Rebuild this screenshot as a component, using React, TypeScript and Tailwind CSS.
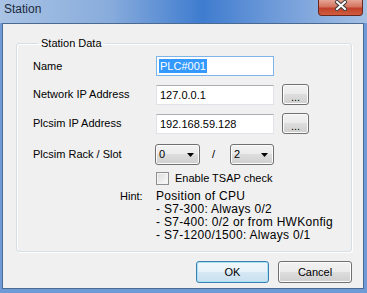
const font = "font-['Liberation_Sans',Arial,sans-serif]";

function Win7Button({ children, className = "", primary = false }: { children: React.ReactNode; className?: string; primary?: boolean }) {
  return (
    <div
      className={`flex items-center justify-center rounded-[3px] border ${
        primary
          ? "border-[#3c7fb1] bg-[linear-gradient(#f1f8fc_0%,#e6f1f8_49%,#d6e8f4_50%,#c9e0ef_100%)] shadow-[inset_0_0_0_1px_#a9e2f7]"
          : "border-[#707070] bg-[linear-gradient(#f2f2f2_0%,#ebebeb_49%,#dddddd_50%,#cfcfcf_100%)] shadow-[inset_0_0_0_1px_#fcfcfc]"
      } text-black ${className}`}
    >
      {children}
    </div>
  );
}

function TextBox({ value, focused = false }: { value: string; focused?: boolean }) {
  return (
    <div
      className={`flex h-[20px] w-[118px] items-center border bg-white pl-[2px] ${
        focused ? "border-[#7eb4ea]" : "border-[#dfe3e8] border-t-[#abadb3]"
      }`}
    >
      {focused ? (
        <span className="bg-[#3399ff] px-[1px] leading-[14px] text-white">{value}</span>
      ) : (
        <span className="px-[1px] leading-[14px]">{value}</span>
      )}
    </div>
  );
}

function Combo({ value, width }: { value: string; width: string }) {
  return (
    <Win7Button className={`h-[21px] ${width} !justify-between pl-[3px] pr-[5px]`}>
      <span>{value}</span>
      <svg width="7" height="4" viewBox="0 0 7 4">
        <path d="M0 0h7L3.5 4z" fill="#000" />
      </svg>
    </Win7Button>
  );
}

export default function App() {
  return (
    <div className={`${font} flex h-[293px] w-[367px] flex-col bg-[#6e9bd6] text-[11px] text-black`}>
      {/* Title bar */}
      <div className="relative flex h-[23px] items-center bg-[linear-gradient(90deg,#a9c3e4_0%,#88acdc_30%,#3f7ccf_55%,#6f9bd9_75%,#a4c0e4_100%)] pl-[4px]">
        <span className="mb-[5px] text-[12px] text-[#1b2a3c]">Station</span>
        <div className="absolute right-[4px] top-0 flex h-[16px] w-[45px] items-center justify-center rounded-b-[4px] border border-t-0 border-[#6b2620] bg-[linear-gradient(#e6a494_0%,#d4745f_45%,#c2402b_55%,#cf5d3e_100%)]">
          <svg width="12" height="11" viewBox="0 0 12 11" className="mb-[4px]">
            <path d="M2 2l8 7M10 2l-8 7" stroke="#3a3a3a" strokeWidth="4" strokeLinecap="square" />
            <path d="M2 2l8 7M10 2l-8 7" stroke="#ffffff" strokeWidth="2" strokeLinecap="square" />
          </svg>
        </div>
      </div>

      {/* Client area */}
      <div className="ml-[2px] mr-[3px] h-[266px] border border-[#4a6a92] bg-[#f0f0f0]">
        <div className="ml-[13px] w-[336px]">
          <fieldset className="mt-[12px] h-[216px] rounded-[3px] border border-[#d5dfe5] px-[16px] shadow-[inset_1px_1px_0_#ffffff,1px_1px_0_#ffffff]">
            <legend className="ml-[5px] px-[3px] leading-[14px]">Station Data</legend>

            <div className="mt-[6px] flex h-[20px] items-center">
              <span className="w-[123px]">Name</span>
              <TextBox value="PLC#001" focused />
            </div>

            <div className="mt-[8px] flex h-[21px] items-center">
              <span className="w-[123px]">Network IP Address</span>
              <TextBox value="127.0.0.1" />
              <Win7Button className="ml-[8px] h-[21px] w-[27px] items-end pb-[2px] leading-[10px]">...</Win7Button>
            </div>

            <div className="mt-[8px] flex h-[21px] items-center">
              <span className="w-[123px]">Plcsim IP Address</span>
              <TextBox value="192.168.59.128" />
              <Win7Button className="ml-[8px] h-[21px] w-[27px] items-end pb-[2px] leading-[10px]">...</Win7Button>
            </div>

            <div className="mt-[10px] flex h-[21px] items-center">
              <span className="w-[122px]">Plcsim Rack / Slot</span>
              <Combo value="0" width="w-[45px]" />
              <span className="ml-[12px] w-[18px]">/</span>
              <Combo value="2" width="w-[44px]" />
            </div>

            <div className="mt-[6px] flex h-[14px] items-center pl-[123px]">
              <div className="h-[13px] w-[13px] border border-[#8e8f8f] bg-[linear-gradient(135deg,#dcdcdc,#fbfbfb)] shadow-[inset_0_0_0_1px_#f4f4f4]" />
              <span className="ml-[6px]">Enable TSAP check</span>
            </div>

            <div className="mt-[5px] flex pl-[87px] leading-[13px]">
              <span className="w-[36px]">Hint:</span>
              <div className="flex flex-col text-[12px] tracking-[0.3px]">
                <span>Position of CPU</span>
                <span>- S7-300: Always 0/2</span>
                <span>- S7-400: 0/2 or from HWKonfig</span>
                <span>- S7-1200/1500: Always 0/1</span>
              </div>
            </div>
          </fieldset>

          <div className="mt-[9px] flex justify-end gap-[9px]">
            <Win7Button primary className="h-[22px] w-[73px]">OK</Win7Button>
            <Win7Button className="h-[22px] w-[74px]">Cancel</Win7Button>
          </div>
        </div>
      </div>
    </div>
  );
}
